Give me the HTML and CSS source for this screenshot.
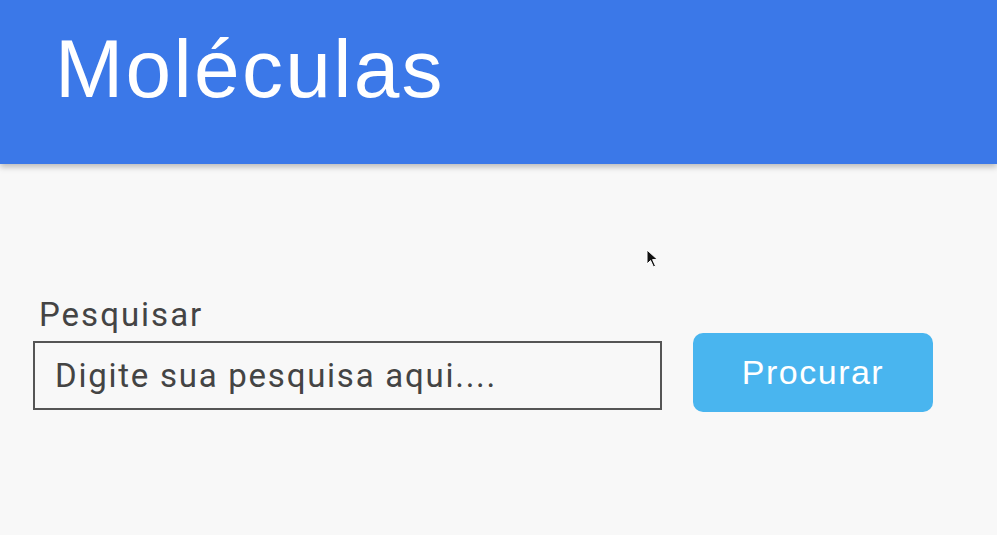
FILE: index.html
```html
<!DOCTYPE html>
<html lang="pt">
<head>
<meta charset="utf-8">
<title>Moléculas</title>
<link rel="stylesheet" href="styles.css">
</head>
<body>
<header class="topbar">
  <h1 class="title">Moléculas</h1>
</header>
<main class="content">
  <form class="search">
    <div class="field">
      <label class="label" for="q">Pesquisar</label>
      <input class="input" id="q" type="text" placeholder="Digite sua pesquisa aqui....">
    </div>
    <button class="btn" type="button">Procurar</button>
  </form>
</main>
<svg class="cursor" width="14" height="20" viewBox="0 0 14 20"><path d="M1 1 L1 15 L4.5 11.5 L7.5 18 L9.5 17 L6.6 10.6 L11.5 10.6 Z" fill="#111" stroke="#fff" stroke-width="1"/></svg>
</body>
</html>
```
FILE: styles.css
```css
* { box-sizing: border-box; }
html, body { margin: 0; padding: 0; }
body {
  background: #f8f8f8;
  font-family: Roboto, "Liberation Sans", sans-serif;
  width: 997px;
  height: 535px;
  overflow: hidden;
  position: relative;
}
.topbar {
  background: #3b78e8;
  height: 164px;
  box-shadow: 0 3px 6px rgba(0,0,0,0.25);
  padding-left: 55px;
  padding-top: 21px;
}
.title {
  margin: 0;
  color: #fff;
  font-family: "Liberation Sans", Arial, sans-serif;
  font-weight: 400;
  font-size: 82px;
  line-height: 96px;
  letter-spacing: 2.3px;
}
.content {
  padding: 133px 0 0 33px;
}
.search {
  display: flex;
  align-items: flex-end;
  gap: 31px;
}
.field {
  display: flex;
  flex-direction: column;
}
.label {
  font-size: 33px;
  letter-spacing: 2px;
  color: #444;
  padding-left: 6px;
  line-height: 36px;
  margin-bottom: 8px;
}
.input {
  width: 629px;
  height: 69px;
  border: 2px solid #555;
  background: #f8f8f8;
  font-family: Roboto, sans-serif;
  font-size: 33px;
  letter-spacing: 1.75px;
  padding: 0 0 0 20px;
  color: #444;
  outline: none;
}
.input::placeholder { color: #444; opacity: 1; }
.btn {
  width: 240px;
  height: 79px;
  margin-bottom: -2px;
  border: none;
  border-radius: 10px;
  background: #49b5ef;
  color: #fff;
  font-family: "Liberation Sans", Arial, sans-serif;
  font-size: 34px;
  letter-spacing: 1.5px;
  padding: 0 0 1px 0;
}
.cursor {
  position: absolute;
  left: 646px;
  top: 249px;
}
```
